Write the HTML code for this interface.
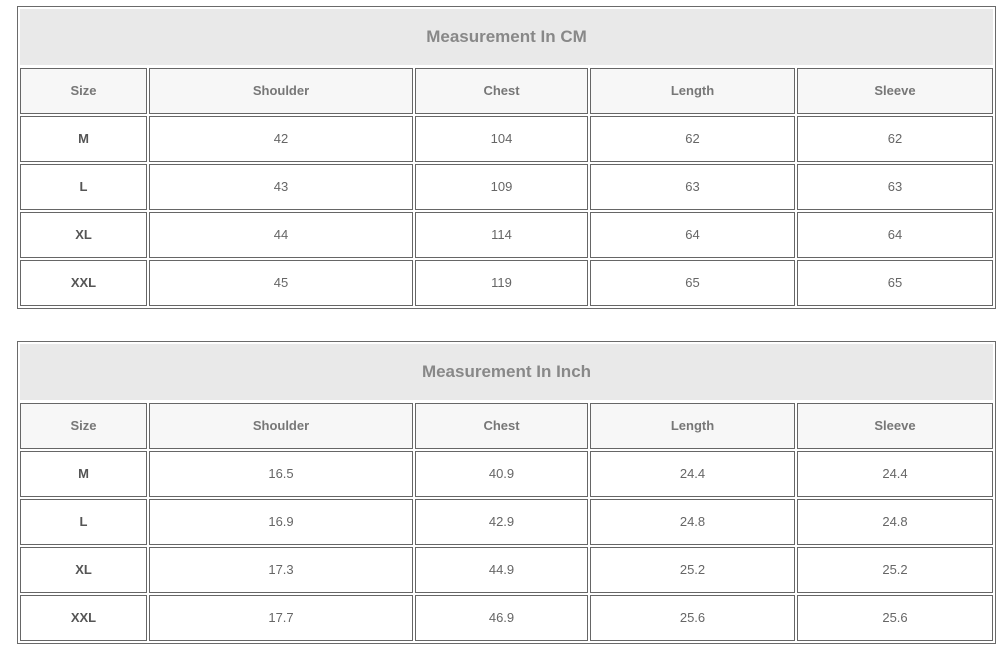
<!DOCTYPE html>
<html><head><meta charset="utf-8"><style>
body{margin:0;width:1002px;height:656px;background:#fff;position:relative;font-family:"Liberation Sans",Arial,sans-serif;overflow:hidden}
.o{position:absolute;left:17px;width:977px;border:1px solid #6a6a6a}
.h{position:absolute;left:20px;width:973px;height:56px;background:#e9e9e9;color:#888;font-weight:bold;font-size:17px;display:flex;align-items:center;justify-content:center}
.r{position:absolute;left:20px;height:46px;width:975px}
.r div{position:absolute;top:0;height:44px;border:1px solid #666;display:flex;align-items:center;justify-content:center;font-size:13px;color:#666;background:#fff;padding-bottom:2px;box-sizing:border-box;height:46px}
.r.t div{background:#f7f7f7;font-weight:bold;color:#777}
.r div:nth-child(1){left:0;width:127px;font-weight:bold;color:#555}
.r div:nth-child(2){left:129px;width:264px}
.r div:nth-child(3){left:395px;width:173px}
.r div:nth-child(4){left:570px;width:205px}
.r div:nth-child(5){left:777px;width:196px}
.r.t div:nth-child(1){color:#777}
</style></head><body>
<div class="o" style="top:6px;height:301px"></div>
<div class="h" style="top:9px">Measurement In CM</div>
<div class="r t" style="top:68px"><div>Size</div><div>Shoulder</div><div>Chest</div><div>Length</div><div>Sleeve</div></div>
<div class="r" style="top:116px"><div>M</div><div>42</div><div>104</div><div>62</div><div>62</div></div>
<div class="r" style="top:164px"><div>L</div><div>43</div><div>109</div><div>63</div><div>63</div></div>
<div class="r" style="top:212px"><div>XL</div><div>44</div><div>114</div><div>64</div><div>64</div></div>
<div class="r" style="top:260px"><div>XXL</div><div>45</div><div>119</div><div>65</div><div>65</div></div>

<div class="o" style="top:341px;height:301px"></div>
<div class="h" style="top:344px">Measurement In Inch</div>
<div class="r t" style="top:403px"><div>Size</div><div>Shoulder</div><div>Chest</div><div>Length</div><div>Sleeve</div></div>
<div class="r" style="top:451px"><div>M</div><div>16.5</div><div>40.9</div><div>24.4</div><div>24.4</div></div>
<div class="r" style="top:499px"><div>L</div><div>16.9</div><div>42.9</div><div>24.8</div><div>24.8</div></div>
<div class="r" style="top:547px"><div>XL</div><div>17.3</div><div>44.9</div><div>25.2</div><div>25.2</div></div>
<div class="r" style="top:595px"><div>XXL</div><div>17.7</div><div>46.9</div><div>25.6</div><div>25.6</div></div>
</body></html>
